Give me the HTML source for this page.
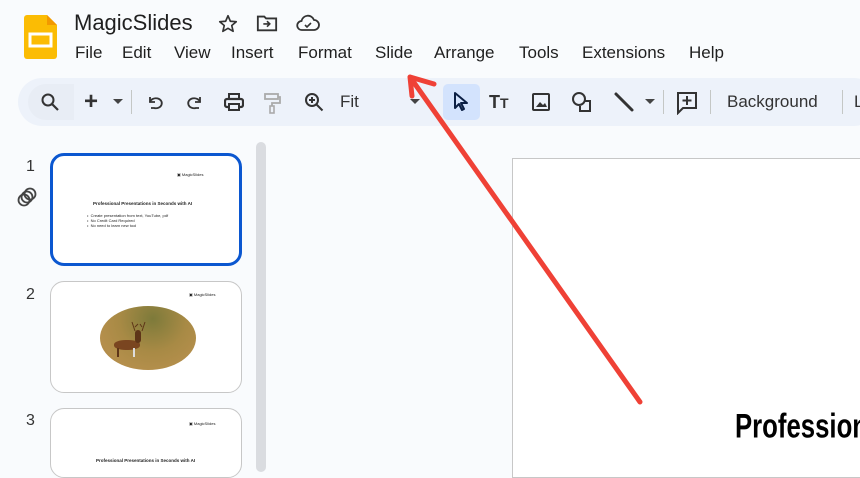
<!DOCTYPE html>
<html><head><meta charset="utf-8"><style>
*{margin:0;padding:0;box-sizing:border-box}
body{width:860px;height:466px;overflow:hidden;background:#f9fbfd;font-family:"Liberation Sans",Arial,sans-serif;position:relative;color:#1f1f1f}
.abs{position:absolute}
.menu span{position:absolute;top:43px;font-size:17px;color:#1f1f1f}
.tb{position:absolute;left:18px;top:78px;width:860px;height:48px;background:#edf2fa;border-radius:24px}
.thumb{position:absolute;left:50px;width:192px;height:112px;background:#fff;border:1px solid #c7c7c7;border-radius:14px;overflow:hidden}
.num{position:absolute;left:26px;font-size:16px;color:#333}
.tiny{position:absolute;font-size:4px;color:#222}
</style></head><body>
<svg class="abs" style="left:24px;top:15px" width="33" height="44" viewBox="0 0 33 44"><path d="M3 0H23L33 10V41a3 3 0 0 1-3 3H3a3 3 0 0 1-3-3V3a3 3 0 0 1 3-3z" fill="#fbbc04"/><path d="M23 0L33 10H23z" fill="#f29900"/><rect x="6" y="19" width="21" height="12" fill="none" stroke="#fff" stroke-width="3"/></svg>
<div class="abs" style="left:74px;top:10px;font-size:22px;color:#1f1f1f">MagicSlides</div>
<svg class="abs" style="left:217px;top:13px" width="22" height="22" viewBox="0 0 24 24"><path d="M12 3l2.6 6 6.4.5-4.9 4.2 1.5 6.3L12 16.7 6.4 20l1.5-6.3L3 9.5l6.4-.5z" fill="none" stroke="#333" stroke-width="1.8" stroke-linejoin="round"/></svg>
<svg class="abs" style="left:256px;top:13px" width="22" height="20" viewBox="0 0 24 20"><path d="M2 3h7l2 2h11v13H2z" fill="none" stroke="#333" stroke-width="2"/><path d="M8 11h7M12 8l3 3-3 3" fill="none" stroke="#333" stroke-width="1.8"/></svg>
<svg class="abs" style="left:296px;top:14px" width="24" height="18" viewBox="0 0 24 18"><path d="M6 16a4.5 4.5 0 0 1-.5-9A6.5 6.5 0 0 1 18 6a4.5 4.5 0 0 1 0 10z" fill="none" stroke="#333" stroke-width="1.8"/><path d="M9 11l2 2 4-4" fill="none" stroke="#333" stroke-width="1.6"/></svg>
<div class="menu">
<span style="left:75px">File</span><span style="left:122px">Edit</span><span style="left:174px">View</span><span style="left:231px">Insert</span><span style="left:298px">Format</span><span style="left:375px">Slide</span><span style="left:434px">Arrange</span><span style="left:519px">Tools</span><span style="left:582px">Extensions</span><span style="left:689px">Help</span>
</div>
<div class="tb"></div>
<div class="abs" style="left:28px;top:84px;width:46px;height:36px;background:#e8edf5;border-radius:18px 0 0 18px"></div>
<svg class="abs" style="left:40px;top:92px" width="20" height="20" viewBox="0 0 20 20"><circle cx="8" cy="8" r="5.5" fill="none" stroke="#333" stroke-width="2"/><path d="M12 12l6 6" stroke="#333" stroke-width="2.2"/></svg>
<div class="abs" style="left:84px;top:88px;font-size:24px;color:#333;font-weight:bold">+</div>
<svg class="abs" style="left:113px;top:99px" width="10" height="6"><path d="M0 0h10L5 5z" fill="#444"/></svg>
<div class="abs" style="left:131px;top:90px;width:1px;height:24px;background:#c4c7c5"></div>
<svg class="abs" style="left:146px;top:93px" width="18" height="18" viewBox="0 0 18 18"><path d="M4 4v5h5" fill="none" stroke="#333" stroke-width="1.8"/><path d="M4 9a6 5 0 1 1 4 6H5" fill="none" stroke="#333" stroke-width="1.8"/></svg>
<svg class="abs" style="left:186px;top:93px" width="18" height="18" viewBox="0 0 18 18"><path d="M14 4v5H9" fill="none" stroke="#333" stroke-width="1.8"/><path d="M14 9a6 5 0 1 0-4 6h3" fill="none" stroke="#333" stroke-width="1.8"/></svg>
<svg class="abs" style="left:224px;top:92px" width="20" height="20" viewBox="0 0 20 20"><rect x="5" y="2" width="10" height="5" fill="none" stroke="#333" stroke-width="2"/><rect x="1" y="7" width="18" height="8" rx="2" fill="none" stroke="#333" stroke-width="2.2"/><rect x="5" y="12" width="10" height="6" fill="#edf2fa" stroke="#333" stroke-width="2"/></svg>
<svg class="abs" style="left:263px;top:92px" width="18" height="22" viewBox="0 0 18 22"><rect x="2" y="2" width="13" height="5" fill="none" stroke="#aaa" stroke-width="1.8"/><path d="M15 5h2v6H9v3" fill="none" stroke="#aaa" stroke-width="1.8"/><rect x="7" y="14" width="4" height="7" fill="none" stroke="#aaa" stroke-width="1.6"/></svg>
<svg class="abs" style="left:304px;top:92px" width="20" height="20" viewBox="0 0 20 20"><circle cx="8" cy="8" r="6" fill="none" stroke="#333" stroke-width="2"/><path d="M12.5 12.5l6 6M8 5v6M5 8h6" stroke="#333" stroke-width="2"/></svg>
<div class="abs" style="left:340px;top:92px;font-size:17px;color:#333">Fit</div>
<svg class="abs" style="left:410px;top:99px" width="10" height="6"><path d="M0 0h10L5 5z" fill="#444"/></svg>
<div class="abs" style="left:443px;top:84px;width:37px;height:36px;background:#d3e3fd;border-radius:5px"></div>
<svg class="abs" style="left:452px;top:91px" width="18" height="22" viewBox="0 0 18 22"><path d="M3 2v15l4-4 3 6 2-1-3-6h6z" fill="none" stroke="#0b1f44" stroke-width="2" stroke-linejoin="round"/></svg>
<div class="abs" style="left:489px;top:92px;font-size:18px;font-weight:bold;color:#333">T<span style="font-size:14px">T</span></div>
<svg class="abs" style="left:531px;top:92px" width="20" height="20" viewBox="0 0 20 20"><rect x="2" y="2" width="16" height="16" rx="1" fill="none" stroke="#333" stroke-width="2"/><path d="M5 15l4-5 3 3 2-2 2 4z" fill="#333"/></svg>
<svg class="abs" style="left:571px;top:91px" width="22" height="22" viewBox="0 0 22 22"><circle cx="8" cy="8" r="6" fill="none" stroke="#333" stroke-width="2"/><path d="M14 10h5v10H9v-5" fill="none" stroke="#333" stroke-width="2"/></svg>
<svg class="abs" style="left:613px;top:91px" width="22" height="22" viewBox="0 0 22 22"><path d="M3 3l16 16" stroke="#333" stroke-width="3" stroke-linecap="round"/></svg>
<svg class="abs" style="left:645px;top:99px" width="10" height="6"><path d="M0 0h10L5 5z" fill="#444"/></svg>
<div class="abs" style="left:663px;top:90px;width:1px;height:24px;background:#c4c7c5"></div>
<svg class="abs" style="left:676px;top:91px" width="22" height="24" viewBox="0 0 22 24"><path d="M2 2h18v15H7l-5 5z" fill="none" stroke="#333" stroke-width="2"/><path d="M11 5v9M6.5 9.5h9" stroke="#333" stroke-width="2"/></svg>
<div class="abs" style="left:710px;top:90px;width:1px;height:24px;background:#c4c7c5"></div>
<div class="abs" style="left:727px;top:92px;font-size:17px;color:#333">Background</div>
<div class="abs" style="left:842px;top:90px;width:1px;height:24px;background:#c4c7c5"></div>
<div class="abs" style="left:854px;top:92px;font-size:17px;color:#333">L</div>

<div class="abs" style="left:256px;top:142px;width:10px;height:330px;background:#dadce0;border-radius:5px"></div>
<div class="num" style="top:158px">1</div>
<div class="num" style="top:286px">2</div>
<div class="num" style="top:412px">3</div>
<svg class="abs" style="left:16px;top:186px" width="22" height="22" viewBox="0 0 22 22"><circle cx="8" cy="14" r="5.5" fill="none" stroke="#444" stroke-width="1.8"/><circle cx="11" cy="11" r="5.5" fill="none" stroke="#444" stroke-width="1.8"/><circle cx="14" cy="8" r="5.5" fill="none" stroke="#444" stroke-width="1.8"/></svg>
<div class="thumb" style="top:153px;border:3px solid #0b57d0;height:113px">
<div class="tiny" style="left:124px;top:16px">▣ MagicSlides</div>
<div class="tiny" style="left:40px;top:45px;font-weight:bold;font-size:4.5px">Professional Presentations in Seconds with AI</div>
<div class="tiny" style="left:34px;top:57px;line-height:5px">•&nbsp; Create presentation from text, YouTube, pdf<br>•&nbsp; No Credit Card Required<br>•&nbsp; No need to learn new tool</div>
</div>
<div class="thumb" style="top:281px">
<div class="tiny" style="left:138px;top:10px">▣ MagicSlides</div>
<div class="abs" style="left:49px;top:24px;width:96px;height:64px;border-radius:50%;background:radial-gradient(ellipse at 55% 20%,#7d7a3a,#a88a45 45%,#b58f4c 75%,#a07838)"></div>
<div class="abs" style="left:63px;top:58px;width:26px;height:10px;background:#7a4520;border-radius:45%"></div>
<div class="abs" style="left:84px;top:48px;width:6px;height:13px;background:#5e3518;border-radius:3px"></div>
<div class="abs" style="left:66px;top:66px;width:2px;height:9px;background:#5e3518"></div>
<div class="abs" style="left:82px;top:66px;width:2px;height:9px;background:#ddd"></div>
<svg class="abs" style="left:80px;top:38px" width="16" height="12"><path d="M4 11L1 2M4 7L7 4M11 11L14 2M11 7L9 4" stroke="#5e3518" stroke-width="1" fill="none"/></svg>
</div>
<div class="thumb" style="top:408px;height:70px">
<div class="tiny" style="left:138px;top:12px">▣ MagicSlides</div>
<div class="tiny" style="left:45px;top:49px;font-weight:bold;font-size:4.5px">Professional Presentations in Seconds with AI</div>
</div>

<div class="abs" style="left:512px;top:158px;width:360px;height:320px;background:#fff;border:1px solid #c7c7c7"></div>
<div class="abs" style="left:735px;top:406px;font-size:33px;font-weight:bold;color:#000;transform:scale(0.78,1.05);transform-origin:left top">Professional</div>

<svg class="abs" style="left:0;top:0" width="860" height="466"><path d="M640 402L410 77M410 77L412 96M410 77L434 84" stroke="#ef4136" stroke-width="5" stroke-linecap="round" fill="none"/></svg>
</body></html>
